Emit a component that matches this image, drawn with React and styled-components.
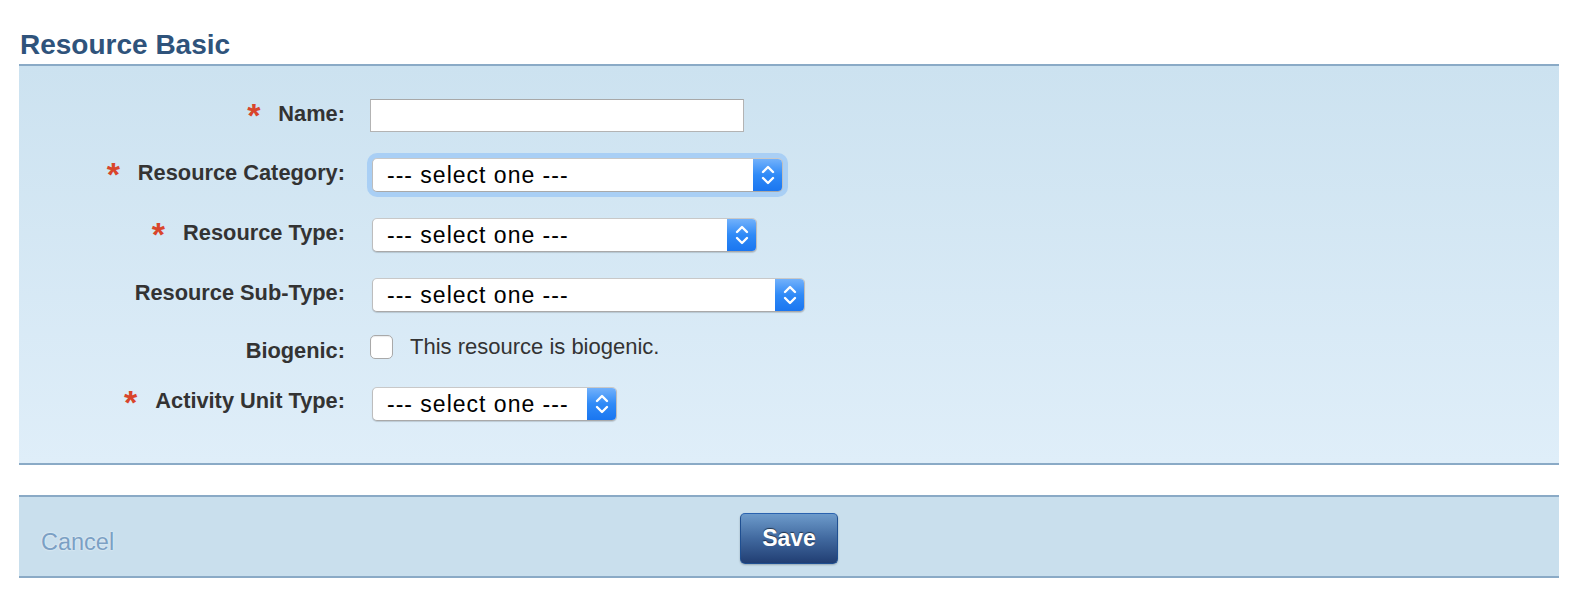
import React from "react";
import styled, { createGlobalStyle } from "styled-components";

const GlobalStyle = createGlobalStyle`
  html, body {
    margin: 0;
    padding: 0;
    background: #ffffff;
  }
  body {
    font-family: "Liberation Sans", Arial, Helvetica, sans-serif;
    color: #333;
  }
`;

const Page = styled.div`
  padding: 28px 32px 0 19px;
`;

const Heading = styled.h2`
  margin: 0 0 2px 1px;
  font-size: 28px;
  line-height: 34px;
  font-weight: 700;
  color: #2f537b;
`;

const Panel = styled.div`
  border-top: 2px solid #8aaac6;
  border-bottom: 2px solid #8aaac6;
  background: linear-gradient(to bottom, #cce2f0 0%, #dfeef9 100%);
  padding: 33px 0 42px;
`;

const Row = styled.div`
  display: grid;
  grid-template-columns: 326px 1fr;
  column-gap: 25px;
  align-items: start;
  height: 34px;
  margin-top: ${(p) => p.$mt || 0}px;
`;

const Label = styled.label`
  display: flex;
  justify-content: flex-end;
  align-items: flex-start;
  padding-top: ${(p) => (p.$pt != null ? p.$pt : 3)}px;
  font-size: 21.8px;
  line-height: 24px;
  font-weight: 700;
  color: #333;
  white-space: nowrap;
`;

const Star = styled.span`
  color: #d9452b;
  font-size: 34px;
  line-height: 24px;
  font-weight: 700;
  margin-right: 18px;
  position: relative;
  top: 1px;
`;

const TextInput = styled.input`
  box-sizing: border-box;
  width: 374px;
  height: 33px;
  margin: 0;
  border: 1px solid #b3b3b3;
  border-top-color: #a8a8a8;
  background: #fff;
  outline: none;
`;

const SelectBox = styled.div`
  box-sizing: border-box;
  display: flex;
  align-items: stretch;
  width: ${(p) => p.$w}px;
  height: 34px;
  margin-left: 2px;
  border: 1px solid #bdbdbd;
  border-top-color: #c8c8c8;
  border-bottom-color: #a9a9a9;
  border-radius: 5px;
  background: #fff;
  box-shadow: ${(p) =>
    p.$focus
      ? "0 0 0 5px #a9cff5, 0 1px 1px rgba(0,0,0,0.15)"
      : "0 1px 1px rgba(0,0,0,0.15)"};
  overflow: hidden;
`;

const SelectText = styled.span`
  flex: 1;
  display: flex;
  align-items: center;
  padding-left: 14px;
  font-size: 23px;
  letter-spacing: 1px;
  color: #000;
  white-space: nowrap;
`;

const ArrowCap = styled.span`
  width: 29px;
  display: flex;
  align-items: center;
  justify-content: center;
  background: linear-gradient(to bottom, #72b1fb 0%, #2f8af7 50%, #1a76f0 100%);
`;

const CheckRow = styled.div`
  display: flex;
  align-items: flex-start;
  gap: 17px;
`;

const CheckBox = styled.span`
  box-sizing: border-box;
  width: 23px;
  height: 24px;
  border: 1px solid #a9a9a9;
  border-radius: 5px;
  background: #fff;
  box-shadow: inset 0 1px 1px rgba(0, 0, 0, 0.08);
`;

const CheckText = styled.span`
  font-size: 22px;
  line-height: 24px;
  color: #333;
`;

const Footer = styled.div`
  margin-top: 30px;
  border-top: 2px solid #8aaac6;
  border-bottom: 2px solid #8aaac6;
  background: #c9dfed;
  display: grid;
  grid-template-columns: 1fr auto 1fr;
  align-items: start;
  padding: 16px 22px 12px;
`;

const CancelLink = styled.a`
  justify-self: start;
  margin-top: 15px;
  font-size: 23.5px;
  line-height: 28px;
  color: #7ba0c4;
  text-decoration: none;
  text-shadow: 0 0 2px rgba(255, 255, 255, 0.9);
  cursor: pointer;
`;

const SaveButton = styled.button`
  box-sizing: border-box;
  width: 98px;
  height: 51px;
  margin: 0;
  border: 1px solid #1f4f91;
  border-top-color: #2a63b0;
  border-radius: 5px;
  background: linear-gradient(to bottom, #6d9bcb 0%, #41699f 50%, #213e73 100%);
  box-shadow: 0 1px 2px rgba(0, 0, 0, 0.25);
  color: #fff;
  font-family: "Liberation Sans", Arial, sans-serif;
  font-size: 23px;
  font-weight: 700;
  text-shadow: 0 -1px 1px rgba(0, 0, 0, 0.55);
  cursor: pointer;
`;

const Chevrons = () => (
  <svg width="16" height="26" viewBox="0 0 16 26" fill="none">
    <path d="M3 10 L8 5 L13 10" stroke="#fff" strokeWidth="2.4" strokeLinecap="round" strokeLinejoin="round" />
    <path d="M3 16 L8 21 L13 16" stroke="#fff" strokeWidth="2.4" strokeLinecap="round" strokeLinejoin="round" />
  </svg>
);

const Select = ({ width, focus }) => (
  <SelectBox $w={width} $focus={focus}>
    <SelectText>--- select one ---</SelectText>
    <ArrowCap>
      <Chevrons />
    </ArrowCap>
  </SelectBox>
);

export default function App() {
  return (
    <>
      <GlobalStyle />
      <Page>
        <Heading>Resource Basic</Heading>
        <Panel>
          <Row>
            <Label>
              <Star>*</Star>Name:
            </Label>
            <div>
              <TextInput type="text" />
            </div>
          </Row>
          <Row $mt={25}>
            <Label>
              <Star>*</Star>Resource Category:
            </Label>
            <Select width={411} focus />
          </Row>
          <Row $mt={26}>
            <Label>
              <Star>*</Star>Resource Type:
            </Label>
            <Select width={385} />
          </Row>
          <Row $mt={26}>
            <Label>Resource Sub-Type:</Label>
            <Select width={433} />
          </Row>
          <Row $mt={23}>
            <Label $pt={4}>Biogenic:</Label>
            <CheckRow>
              <CheckBox />
              <CheckText>This resource is biogenic.</CheckText>
            </CheckRow>
          </Row>
          <Row $mt={18}>
            <Label $pt={2}>
              <Star>*</Star>Activity Unit Type:
            </Label>
            <Select width={245} />
          </Row>
        </Panel>
        <Footer>
          <CancelLink>Cancel</CancelLink>
          <SaveButton type="button">Save</SaveButton>
          <span />
        </Footer>
      </Page>
    </>
  );
}
